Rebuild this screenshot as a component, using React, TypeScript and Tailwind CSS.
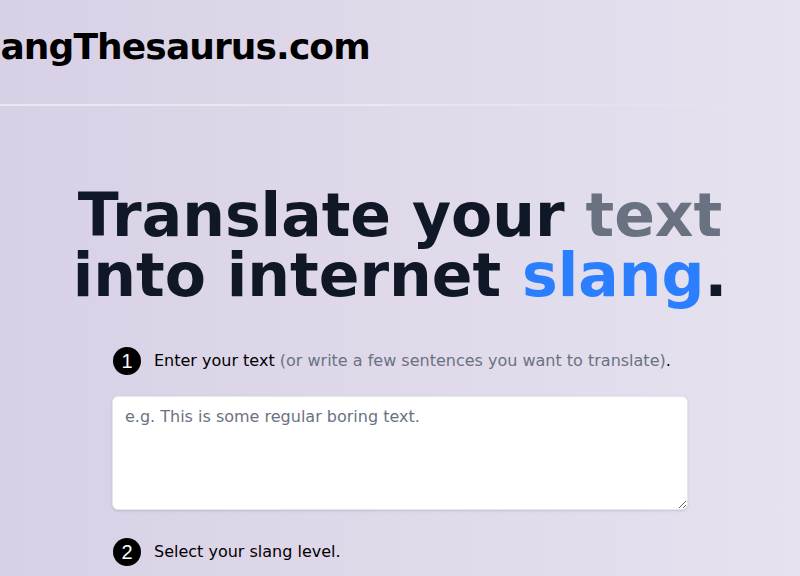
import React from 'react';

const sans = { fontFamily: '"DejaVu Sans", sans-serif' };

const StepBadge: React.FC<{ n: number }> = ({ n }) => (
  <span className="ml-px flex h-7 w-7 shrink-0 items-center justify-center rounded-full bg-black text-[20px] leading-none text-white font-['Liberation_Sans',sans-serif]">
    {n}
  </span>
);

const App: React.FC = () => {
  return (
    <div
      className="min-h-[576px] w-full overflow-hidden bg-gradient-to-r from-[#d8d1e6] via-[#dfd9ea] to-[#e6e2ef] text-gray-900"
      style={sans}
    >
      <header className="pt-[27px] pb-[37px]">
        <a href="#" className="-ml-[36px] block whitespace-nowrap text-4xl font-bold tracking-tight text-black">
          SlangThesaurus.com
        </a>
      </header>
      <div className="h-[2px] w-[780px] bg-gradient-to-r from-[#ebe7f1] via-[#ebe7f1] to-transparent" />

      <main className="mx-auto mt-[79px] max-w-xl">
        <h1 className="-mx-16 text-center text-6xl font-bold leading-none text-gray-900">
          Translate your <span className="text-gray-500">text</span>
          <br />
          into internet <span className="text-blue-500">slang</span>.
        </h1>

        <div className="mt-[42px] flex items-center gap-[13px]">
          <StepBadge n={1} />
          <p className="text-base text-black">
            Enter your text <span className="text-gray-500">(or write a few sentences you want to translate)</span>.
          </p>
        </div>

        <textarea
          rows={4}
          className="mt-[21px] block w-full rounded-md border border-gray-200 bg-white px-3 py-2 text-base text-gray-900 shadow-sm placeholder:text-gray-500 focus:outline-none"
          placeholder="e.g. This is some regular boring text."
        />

        <div className="mt-[28px] flex items-center gap-[13px]">
          <StepBadge n={2} />
          <p className="text-base text-black">Select your slang level.</p>
        </div>
      </main>
    </div>
  );
};

export default App;
